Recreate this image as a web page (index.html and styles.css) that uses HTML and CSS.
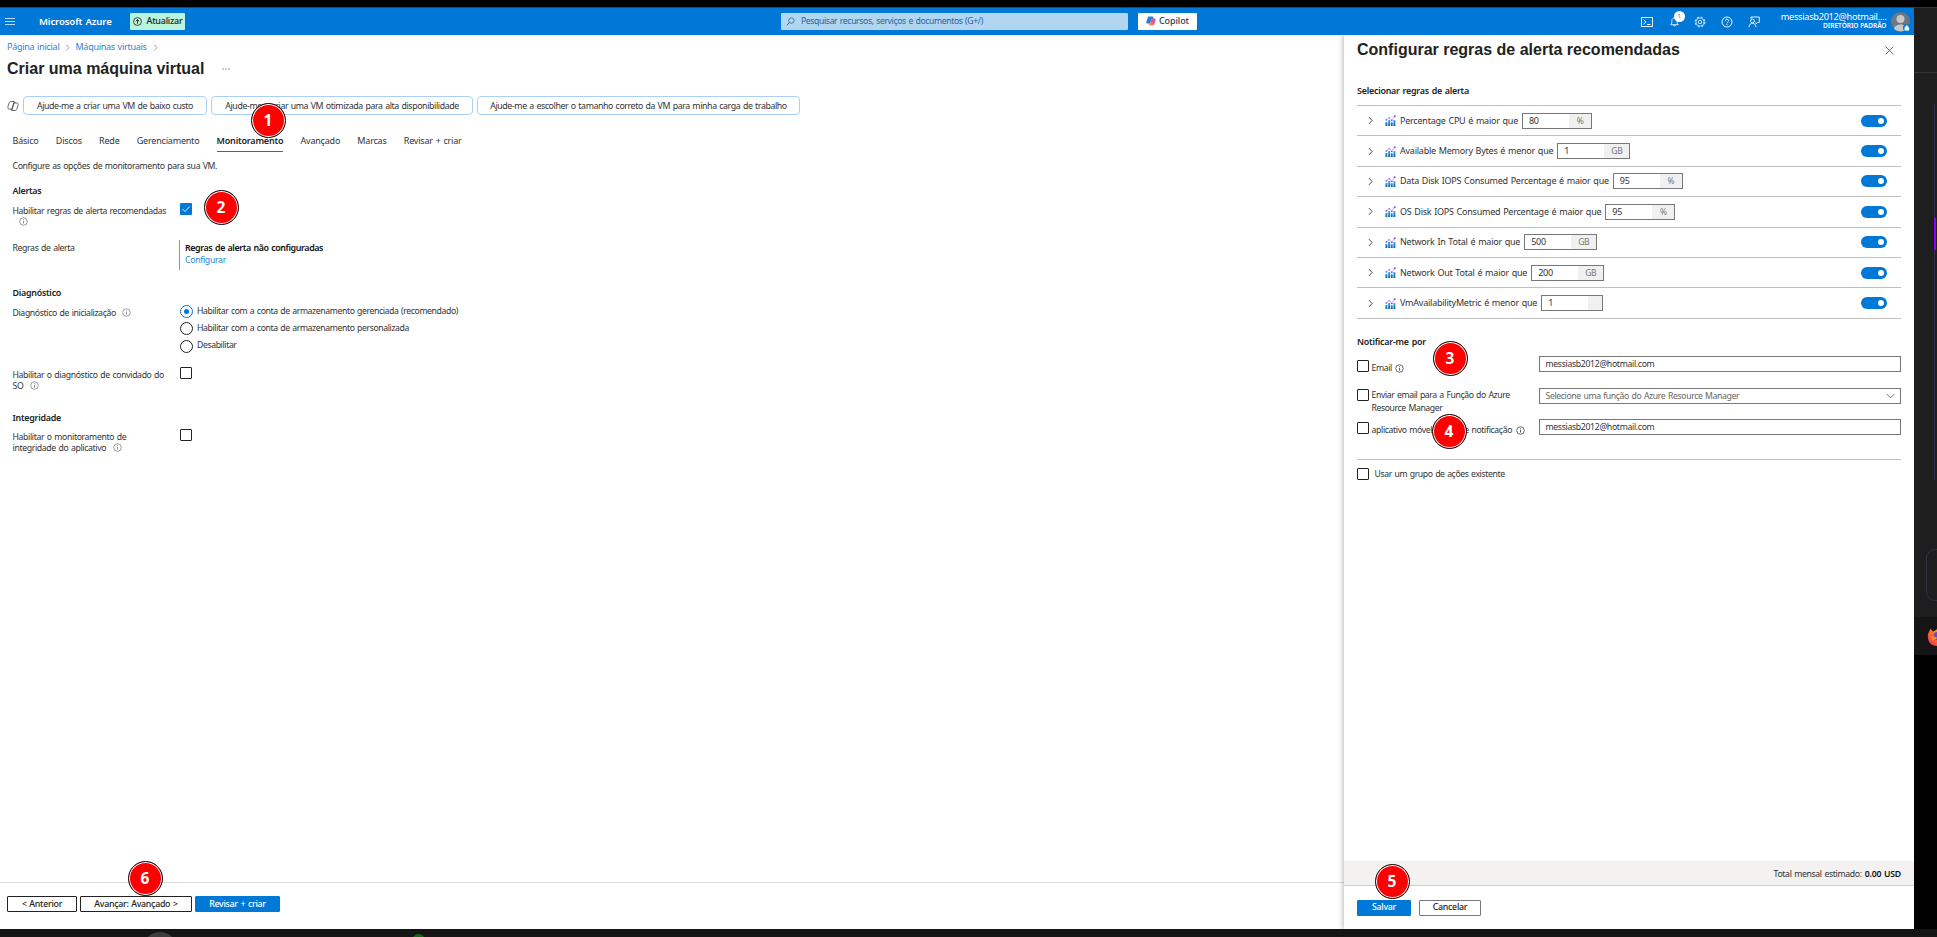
FILE: index.html
```
<!DOCTYPE html>
<html lang="pt-BR">
<head>
<meta charset="utf-8">
<title>Criar uma máquina virtual - Microsoft Azure</title>
<link rel="stylesheet" href="styles.css">
</head>
<body>
<svg class="defs" width="0" height="0">
  <defs>
    <linearGradient id="bar" x1="0" y1="0" x2="0" y2="1"><stop offset="0" stop-color="#35b4ea"/><stop offset="1" stop-color="#0a5fb4"/></linearGradient>
    <linearGradient id="cpA" x1="0" y1="0" x2="1" y2="1"><stop offset="0" stop-color="#1ba7f0"/><stop offset=".5" stop-color="#2b6fe0"/><stop offset="1" stop-color="#4fc36b"/></linearGradient>
    <linearGradient id="cpB" x1="0" y1="1" x2="1" y2="0"><stop offset="0" stop-color="#ffb13d"/><stop offset=".5" stop-color="#f4566b"/><stop offset="1" stop-color="#b05be8"/></linearGradient>
    <linearGradient id="fox" x1="1" y1="0" x2="0" y2="1"><stop offset="0" stop-color="#ffd53a"/><stop offset=".45" stop-color="#ff7a1f"/><stop offset="1" stop-color="#f0246a"/></linearGradient>
    <symbol id="info" viewBox="0 0 10 10"><circle cx="5" cy="5" r="4.2" fill="none" stroke="currentColor" stroke-width=".8"/><path d="M5 4.3v3M5 2.6v.9" stroke="currentColor" stroke-width=".9"/></symbol>
    <symbol id="chev" viewBox="0 0 6 10"><path d="M1 .8 5 5 1 9.2" fill="none" stroke="currentColor" stroke-width="1"/></symbol>
    <symbol id="metric" viewBox="0 0 12 12"><path d="M.5 7.500h2.100v4.500H.5zM3.500 5.500h2.100V12H3.500zM6.400 7.800h2V12h-2zM9.200 5.500h2.100V12H9.200z" fill="url(#bar)"/><path d="M1.500 5.300 4.600 3l2.800 2.700L10.600 1.200" fill="none" stroke="#b18af6" stroke-width=".7"/><circle cx="1.500" cy="5.300" r=".95" fill="#8a4be8"/><circle cx="4.600" cy="3" r=".95" fill="#a67af4"/><circle cx="7.400" cy="5.800" r=".95" fill="#8a4be8"/><circle cx="10.600" cy="1.300" r="1.100" fill="#8a4be8"/></symbol>
  </defs>
</svg>
<div class="desktop">
  <div class="browser">
    <header class="top">
      <svg class="burger" viewBox="0 0 10 8"><path d="M0 .5h10M0 3.5h10M0 6.5h10" stroke="#fff" stroke-width=".9" opacity=".8"/></svg>
      <span class="brand">Microsoft Azure</span>
      <span class="upgrade"><svg viewBox="0 0 10 10"><circle cx="5" cy="5" r="4.4" fill="none" stroke="#222" stroke-width=".9"/><path d="M5 7.6V3M3.2 4.7 5 2.8l1.8 1.9" fill="none" stroke="#222"/></svg>Atualizar</span>
      <span class="search"><svg viewBox="0 0 10 10"><circle cx="6" cy="4" r="3" fill="none" stroke="#1b5a94" stroke-width=".8"/><path d="M3.8 6.2.7 9.3" stroke="#1b5a94" stroke-width=".9"/></svg>Pesquisar recursos, serviços e documentos (G+/)</span>
      <span class="copilot"><svg viewBox="0 0 10 10"><path d="M3.200.600h3c.7 0 1 .5 1.200 1.200L7.700 3H5.600L4.300 7.600H1.800C.3 7.600.1 6.500.500 5.200l1-3C1.900 1 2.300.600 3.200.600z" fill="url(#cpA)"/><path d="M6.800 9.400h-3c-.7 0-1-.5-1.200-1.200L2.300 7h2.100L5.700 2.400h2.500c1.500 0 1.700 1.100 1.300 2.400l-1 3c-.4 1.200-.8 1.600-1.700 1.600z" fill="url(#cpB)"/></svg>Copilot</span>
      <div class="tools">
        <svg class="t-shell" viewBox="0 0 12 10"><rect x=".5" y=".5" width="11" height="9" fill="none" stroke="#fff" stroke-width=".9"/><path d="M2.500 2.700 5 5 2.500 7.300M6 7.500h3.500" fill="none" stroke="#fff" stroke-width=".9"/></svg>
        <span class="bell"><svg viewBox="0 0 10 11"><path d="M.8 8.500h8.400L8 6.700V4C8 2.200 6.800 1 5 1S2 2.200 2 4v2.700zM3.800 8.800c0 1.600 2.400 1.600 2.400 0" fill="none" stroke="#fff" stroke-width=".9"/></svg><i>1</i></span>
        <svg class="t-gear" viewBox="0 0 12 12"><circle cx="6" cy="6" r="4.900" fill="none" stroke="#fff" stroke-width="1" stroke-dasharray="2.300 1.548" opacity=".9"/><circle cx="6" cy="6" r="4" fill="none" stroke="#fff" stroke-width=".6"/><circle cx="6" cy="6" r="1.700" fill="none" stroke="#fff" stroke-width=".8"/></svg>
        <svg class="t-help" viewBox="0 0 12 12"><circle cx="6" cy="6" r="5" fill="none" stroke="#fff" stroke-width=".9"/><path d="M4.400 4.800C4.400 2.600 7.600 2.700 7.600 4.700 7.600 5.900 6 6 6 7.300M6 8.100v1.100" fill="none" stroke="#fff" stroke-width=".9"/></svg>
        <svg class="t-feed" viewBox="0 0 12 12"><path d="M3 3V1h8.300v5.500H9.500L8 8V6.500" fill="none" stroke="#fff" stroke-width=".9"/><circle cx="4.500" cy="5" r="1.900" fill="none" stroke="#fff" stroke-width=".9"/><path d="M1 11c.3-5 6.700-5 7 0" fill="none" stroke="#fff" stroke-width=".9"/></svg>
      </div>
      <div class="account"><span>messiasb2012@hotmail....</span><b>DIRETÓRIO PADRÃO</b></div>
      <svg class="avatar" viewBox="0 0 20 20"><circle cx="9.500" cy="9.500" r="9.500" fill="#6f7780"/><circle cx="9.500" cy="7" r="4" fill="#c6c8ca"/><path d="M3 17c.5-6 12.500-6 13 0-3.500 3.200-9.500 3.200-13 0z" fill="#c6c8ca"/><circle cx="15.800" cy="15.800" r="3.800" fill="#0078d4"/><path d="M13.800 15.300h4v3h-4zM14.700 15.300c0-2.400 2.200-2.400 2.200 0" fill="#fff" stroke="#fff" stroke-width=".5"/></svg>
    </header>
    <div class="body">
      <main class="main">
        <nav class="crumbs"><a>Página inicial</a><svg><use href="#chev"/></svg><a>Máquinas virtuais</a><svg><use href="#chev"/></svg></nav>
        <div class="title"><h1>Criar uma máquina virtual</h1><i></i><i></i><i></i></div>
        <div class="helpers">
          <svg viewBox="0 0 12 12"><path d="M4 1.500h3.200L5 9H2.200C.8 9 .6 7.600 1 6.300l1-3C2.400 2 2.900 1.500 4 1.500zM8 10.500H4.800L7 3h2.800c1.400 0 1.600 1.400 1.200 2.700l-1 3c-.4 1.300-.9 1.800-2 1.800zM7.200 1.500 8.300 3M3.700 9l1.100 1.500" fill="none" stroke="#444" stroke-width=".8"/></svg>
          <span class="h1b">Ajude-me a criar uma VM de baixo custo</span><span class="h2b">Ajude-me a criar uma VM otimizada para alta disponibilidade</span><span class="h3b">Ajude-me a escolher o tamanho correto da VM para minha carga de trabalho</span>
        </div>
        <div class="tabs"><span>Básico</span><span>Discos</span><span>Rede</span><span>Gerenciamento</span><span class="on">Monitoramento</span><span>Avançado</span><span>Marcas</span><span>Revisar + criar</span></div>
        <p class="desc">Configure as opções de monitoramento para sua VM.</p>
        <h2 class="s-alert">Alertas</h2>
        <div class="field f-enable"><label>Habilitar regras de alerta recomendadas<br><svg class="info wrapped"><use href="#info"/></svg></label><span class="cb checked"><svg viewBox="0 0 12 12"><path d="m2.500 6 2.500 2.500L9.700 3.600" fill="none" stroke="#fff" stroke-width=".9"/></svg></span></div>
        <div class="field f-rules"><label>Regras de alerta</label><div class="rules"><b>Regras de alerta não configuradas</b><a>Configurar</a></div></div>
        <h2 class="s-diag">Diagnóstico</h2>
        <div class="field f-boot"><label>Diagnóstico de inicialização<svg class="info"><use href="#info"/></svg></label>
          <div class="radios"><span class="sel"><i></i>Habilitar com a conta de armazenamento gerenciada (recomendado)</span><span><i></i>Habilitar com a conta de armazenamento personalizada</span><span><i></i>Desabilitar</span></div></div>
        <div class="field f-guest"><label>Habilitar o diagnóstico de convidado do<br>SO<svg class="info"><use href="#info"/></svg></label><span class="cb"></span></div>
        <h2 class="s-int">Integridade</h2>
        <div class="field f-app"><label>Habilitar o monitoramento de<br>integridade do aplicativo<svg class="info"><use href="#info"/></svg></label><span class="cb"></span></div>
        <footer class="foot"><span class="btn prev">&lt; Anterior</span><span class="btn next">Avançar: Avançado &gt;</span><span class="btn primary review">Revisar + criar</span></footer>
      </main>
      <aside class="panel">
        <div class="p-head"><h1>Configurar regras de alerta recomendadas</h1><svg viewBox="0 0 10 10"><path d="m.7.700 8.600 8.600M9.300.700.7 9.300" stroke="#333" stroke-width=".8"/></svg></div>
        <h2 class="p-sel">Selecionar regras de alerta</h2>
        <div class="rows">
          <div class="row"><svg class="ch"><use href="#chev"/></svg><svg class="me"><use href="#metric"/></svg><span>Percentage CPU é maior que</span><div class="num">80<i class="pc">%</i></div><em></em></div>
          <div class="row"><svg class="ch"><use href="#chev"/></svg><svg class="me"><use href="#metric"/></svg><span>Available Memory Bytes é menor que</span><div class="num">1<i>GB</i></div><em></em></div>
          <div class="row"><svg class="ch"><use href="#chev"/></svg><svg class="me"><use href="#metric"/></svg><span>Data Disk IOPS Consumed Percentage é maior que</span><div class="num">95<i class="pc">%</i></div><em></em></div>
          <div class="row"><svg class="ch"><use href="#chev"/></svg><svg class="me"><use href="#metric"/></svg><span>OS Disk IOPS Consumed Percentage é maior que</span><div class="num">95<i class="pc">%</i></div><em></em></div>
          <div class="row"><svg class="ch"><use href="#chev"/></svg><svg class="me"><use href="#metric"/></svg><span>Network In Total é maior que</span><div class="num">500<i>GB</i></div><em></em></div>
          <div class="row"><svg class="ch"><use href="#chev"/></svg><svg class="me"><use href="#metric"/></svg><span>Network Out Total é maior que</span><div class="num">200<i>GB</i></div><em></em></div>
          <div class="row"><svg class="ch"><use href="#chev"/></svg><svg class="me"><use href="#metric"/></svg><span>VmAvailabilityMetric é menor que</span><div class="num">1<i class="none"></i></div><em></em></div>
        </div>
        <h2 class="p-not">Notificar-me por</h2>
        <div class="notify n-mail"><span class="cb"></span><label>Email<svg class="info"><use href="#info"/></svg></label><div class="box">messiasb2012@hotmail.com</div></div>
        <div class="notify n-role"><span class="cb"></span><label>Enviar email para a Função do Azure<br>Resource Manager</label><div class="box select">Selecione uma função do Azure Resource Manager<svg viewBox="0 0 10 6"><path d="m.7.700 4.300 4.300L9.300.700" fill="none" stroke="#444" stroke-width=".8"/></svg></div></div>
        <div class="notify n-app"><span class="cb"></span><label>aplicativo móvel do Azure notificação<svg class="info"><use href="#info"/></svg></label><div class="box">messiasb2012@hotmail.com</div></div>
        <div class="group"><span class="cb"></span>Usar um grupo de ações existente</div>
        <div class="total"><span>Total mensal estimado: </span><b>0.00 USD</b></div>
        <div class="p-foot"><span class="btn primary save">Salvar</span><span class="btn cancel">Cancelar</span></div>
      </aside>
    </div>
  </div>
  <div class="strip"><div class="s-top"></div><div class="s-mid"><div class="s-line"><i></i></div><div class="s-box"></div></div><div class="s-dock"><svg viewBox="0 0 18 18"><path d="M1 6 3.500.8 6 3.500 9 2l2-2 1 3c4 1 6 4 6 7.500a8 8 0 0 1-8 7.500C4 18 0 14 1 6z" fill="url(#fox)"/><circle cx="10.500" cy="8" r="4" fill="#6a45d6"/><path d="M4 8.500c3-1 5 .5 6.500 1.500-1.500 1.500-4 1-5 3z" fill="#ff8a1e"/></svg></div></div>
</div>
<i class="dock-a"></i><i class="dock-b"></i>
<span class="pin p1">1</span><span class="pin p2">2</span><span class="pin p3">3</span><span class="pin p4">4</span><span class="pin p5">5</span><span class="pin p6">6</span>
</body>
</html>
```
FILE: styles.css
```
* { box-sizing: border-box; }
html, body { margin: 0; height: 100%; }
body { position: relative; height: 937px; overflow: hidden; background: #151515; color: #333; font: 8.7px/12px "Noto Sans", sans-serif; letter-spacing: -.4px; word-spacing: .7px; white-space: nowrap; }
h1, h2, p { margin: 0; }
svg { display: block; flex: none; }
i, em { font-style: normal; }
.defs { position: absolute; }
.desktop { display: flex; height: 929px; border-top: 7px solid #000; }
.browser { width: 1914px; display: flex; flex-direction: column; background: #fff; }

/* header */
.top { height: 28px; border-top: 1px solid #33414d; background: #0078d7; color: #fff; display: flex; align-items: center; flex: none; }
.burger { width: 10px; height: 8px; margin-left: 5px; }
.brand { width: 90.500px; margin-left: 24px; font-size: 9.6px; font-weight: 600; letter-spacing: -.12px; }
.upgrade { width: 55px; height: 17px; margin-bottom: 1px; padding-left: 3px; background: #b9f5de; color: #222; border-radius: 1px; display: flex; align-items: center; gap: 5px; font-size: 9px; font-weight: 500; letter-spacing: -.25px; }
.upgrade svg { width: 9px; height: 9px; }
.search { width: 347px; height: 17px; margin: 0 10px 1px 596px; padding-left: 5px; background: #b1d6f2; color: #2a6299; border-radius: 1px; display: flex; align-items: center; gap: 6.500px; }
.search svg { width: 9px; height: 9px; }
.copilot { width: 59px; height: 17px; margin-bottom: 1px; padding-left: 8px; background: #fff; color: #243a5e; border-radius: 1px; display: flex; align-items: center; gap: 3.500px; font-size: 9px; font-weight: 500; letter-spacing: -.1px; }
.copilot svg { width: 10px; height: 10px; }
.tools { display: flex; align-items: center; margin-left: 444.500px; width: 121.500px; }
.t-shell { width: 12px; height: 10px; }
.bell { position: relative; margin-left: 16.500px; }
.bell svg { width: 9px; height: 10px; }
.bell i { position: absolute; left: 4px; top: -6px; width: 11px; height: 11px; border-radius: 50%; background: #fff; color: #0078d7; font-size: 6px; line-height: 10px; text-align: center; letter-spacing: 0; }
.t-gear { width: 12px; height: 12px; margin-left: 15.500px; }
.t-help { width: 12px; height: 12px; margin-left: 15px; }
.t-feed { width: 12px; height: 12px; margin-left: 15px; }
.account { width: 124px; display: flex; flex-direction: column; align-items: flex-end; font-size: 9.2px; letter-spacing: -.27px; line-height: 10px; margin-bottom: 1px; }
.account b { font-size: 6.500px; font-weight: 600; line-height: 8px; letter-spacing: 0; word-spacing: 0; }
.avatar { width: 20px; height: 20px; margin-left: 4px; }

/* main column */
.body { flex: 1; display: flex; min-height: 0; }
.main { width: 1344px; display: flex; flex-direction: column; }
.crumbs { height: 24px; padding-left: 7px; display: flex; align-items: center; color: #2684d5; font-size: 9px; letter-spacing: -.27px; }
.crumbs svg { width: 5px; height: 7px; margin: 0 5px 0 6px; color: #777; }
.title { height: 19px; padding-left: 7px; display: flex; align-items: center; gap: 1px; }
h1 { font: 700 16px/19px "Liberation Sans", sans-serif; color: #222; letter-spacing: 0; word-spacing: 0; }
.title h1 { width: 214px; }
.title i { width: 2px; height: 2px; background: #ccc; }
.helpers { height: 19px; margin-top: 18px; padding-left: 7px; display: flex; align-items: center; font-size: 8.800px; letter-spacing: -.4px; }
.helpers svg { width: 12px; height: 12px; margin-right: 4px; }
.helpers span { height: 19px; line-height: 18px; border: 1px solid #a9d0f8; border-radius: 4px; text-align: center; margin-right: 4px; }
.h1b { width: 184px; } .h2b { width: 262px; } .h3b { width: 323px; }
.tabs { display: flex; margin-top: 16px; padding-left: 12.500px; gap: 17.200px; height: 21px; font-size: 9px; letter-spacing: -.2px; line-height: 20px; }
.tabs .on { font-weight: 600; border-bottom: 1px solid #0078d7; color: #222; }
.desc { margin: 8px 0 0 12.500px; height: 12px; letter-spacing: -.36px; }
h2 { font-size: 8.900px; font-weight: 600; line-height: 12px; height: 12px; letter-spacing: -.25px; color: #222; }
.main h2 { padding-left: 12.500px; }
.s-alert { margin-top: 13px; }
.field { display: flex; padding-left: 12.500px; }
.field label { width: 167.500px; padding-top: 2.500px; line-height: 11px; letter-spacing: -.36px; }
.info { display: inline-block; width: 9px; height: 9px; margin-left: 6.500px; vertical-align: -1.500px; color: #777; }
.wrapped { vertical-align: -1px; }
.cb { width: 12px; height: 12px; border: 1px solid #222; border-radius: 1px; flex: none; }
.checked { background: #0078d7; border: 0; }
.f-enable { margin-top: 6px; height: 37px; }
.f-rules { height: 30px; }
.rules { display: flex; flex-direction: column; margin-left: -1px; border-left: 1px solid #7fba00; padding: 1px 0 0 5px; line-height: 13px; }
.rules b { font-weight: 600; color: #111; font-size: 8.900px; letter-spacing: -.39px; }
.rules a { color: #2684d5; letter-spacing: -.3px; }
.s-diag { margin-top: 17px; }
.f-boot { margin-top: 4px; height: 64px; }
.f-boot label { padding-top: 4.500px; }
.radios { line-height: 11px; }
.radios span { display: flex; align-items: center; height: 17.300px; padding-bottom: 1px; }
.radios i { width: 13px; height: 13px; border: 1px solid #222; border-radius: 50%; margin: 1px 4px 0 0; display: grid; place-items: center; }
.radios .sel i { border-color: #0078d7; }
.radios .sel i::after { content: ""; width: 5px; height: 5px; border-radius: 50%; background: #0078d7; }
.s-int { margin-top: 21px; }
.f-guest { height: 24px; }
.f-app { margin-top: 5px; }
.foot { margin-top: auto; height: 47px; border-top: 1px solid #dcdcdc; padding: 13px 0 0 7px; display: flex; gap: 3px; }
.btn { height: 16px; line-height: 14px; border: 1px solid #222; border-radius: 1px; text-align: center; font-size: 8.800px; font-weight: 500; letter-spacing: -.27px; color: #222; }
.primary { background: #0078d7; border-color: #0078d7; color: #fff; }
.prev { width: 70px; } .next { width: 112px; } .review { width: 85px; }

/* side panel */
.panel { width: 570px; background: #fff; display: flex; flex-direction: column; box-shadow: -1px 0 5px rgba(0,0,0,.28); clip-path: inset(0 0 0 -8px); padding-top: 4px; }
.p-head { display: flex; justify-content: space-between; align-items: center; height: 20px; padding: 0 20px 0 13px; }
.p-head svg { width: 9px; height: 9px; margin-top: 3px; }
.panel h2 { margin-left: 13px; }
.panel .p-sel, .panel .p-not { letter-spacing: -.22px; }
.p-sel { margin-top: 26px; }
.rows { margin: 8px 13px 0; border-top: 1px solid #bfbfbf; }
.row { height: 30.400px; display: flex; align-items: center; border-bottom: 1px solid #bfbfbf; font-size: 9px; letter-spacing: -.23px; }
.ch { width: 5px; height: 9px; margin: 0 12px 0 11px; }
.me { width: 11px; height: 11px; margin-right: 4px; }
.num { height: 16px; margin-left: 4px; border: 1px solid #777; padding-left: 6px; line-height: 14px; width: 73px; display: flex; justify-content: space-between; letter-spacing: -.3px; }
.num:has(.pc) { width: 70px; }
.num:has(.none) { width: 62px; }
.num i { background: #f0f0f0; width: 25px; color: #777; text-align: center; font-size: 8.500px; line-height: 13px; }
.num .pc { width: 22px; }
.num .none { width: 14px; }
.row em { margin: 0 14px 0 auto; width: 26px; height: 12px; border-radius: 6px; background: #0078d7; padding: 3px 3px 0 17px; }
.row em::after { content: ""; display: block; width: 6px; height: 6px; border-radius: 50%; background: #fff; }
.p-not { margin-top: 17.200px; }
.notify { display: flex; padding: 0 13px; }
.notify label { width: 170px; padding-left: 2.500px; line-height: 13px; }
.notify .info { color: #333; margin-left: 3px; vertical-align: -2px; }
.n-app .info { margin-left: 4px; }
.box { width: 362px; height: 16px; border: 1px solid #777; padding-left: 5.500px; line-height: 16px; letter-spacing: -.33px; }
.n-mail { margin-top: 8px; height: 32px; }
.n-mail .cb { margin-top: 4px; }
.n-mail label { padding-top: 6px; }
.n-mail .box, .n-app .box { line-height: 15px; }
.n-role { height: 31px; }
.n-role .cb { margin-top: 1px; }
.n-role label { padding-top: 1.500px; }
.n-app .cb { margin-top: 3px; }
.n-app label { padding-top: 5px; letter-spacing: -.36px; }
.notify .select { display: flex; justify-content: space-between; align-items: center; color: #666; padding-right: 5px; line-height: 14px; letter-spacing: -.38px; }
.select svg { width: 9px; height: 6px; }
.group { margin: 22px 13px 0; border-top: 1px solid #bfbfbf; padding-top: 8px; display: flex; gap: 5.500px; }
.total { margin-top: auto; height: 25px; background: #f3f2f1; border-bottom: 1px solid #ccc; display: flex; justify-content: flex-end; gap: 3px; align-items: center; padding: 1px 13px 0 0; letter-spacing: -.34px; }
.total b { font-weight: 600; color: #111; letter-spacing: -.2px; }
.p-foot { height: 43px; padding: 14px 0 0 13px; display: flex; gap: 8px; flex: none; }
.p-foot .btn { line-height: 13px; }
.save { width: 54px; } .cancel { width: 62px; border-color: #777; }

/* desktop edge at the right */
.strip { flex: 1; background: #000; display: flex; flex-direction: column; border-top: 1px solid #333; }
.s-top { height: 65px; background: #1e1e1e; border-bottom: 1px solid #333; flex: none; }
.s-mid { height: 544px; background: #1e1e1e; flex: none; padding-top: 31px; overflow: hidden; }
.s-line { height: 376px; width: 1px; margin-left: 20px; background: #33304a; padding-top: 114px; }
.s-line i { display: block; width: 2px; height: 32px; background: #8b00ff; }
.s-box { height: 52px; width: 40px; margin: 69px 0 0 12px; border: 1px solid #33304a; border-radius: 9px; }
.s-dock { height: 38px; background: #151515; flex: none; overflow: hidden; padding: 11px 0 0 13px; }
.s-dock svg { width: 18px; height: 18px; }
.dock-a, .dock-b { position: absolute; border-radius: 50%; }
.dock-a { left: 145px; top: 932px; width: 30px; height: 24px; background: #3c3c3c; }
.dock-b { left: 412px; top: 934px; width: 13px; height: 13px; background: #0f6b1c; }

/* step markers laid over the screen */
.pin { position: absolute; width: 35px; height: 35px; border-radius: 50%; background: #f00; border: 1.500px solid #111; box-shadow: inset 0 0 0 1px #fff; color: #fff; font: 700 15.500px/32px "Noto Sans", sans-serif; letter-spacing: 0; text-align: center; }
.p1 { left: 250.500px; top: 102.500px; } .p2 { left: 203.500px; top: 189.500px; } .p3 { left: 1432.500px; top: 340.500px; }
.p4 { left: 1431.500px; top: 413.500px; } .p5 { left: 1374.500px; top: 863.500px; } .p6 { left: 127.500px; top: 860.500px; }
```
